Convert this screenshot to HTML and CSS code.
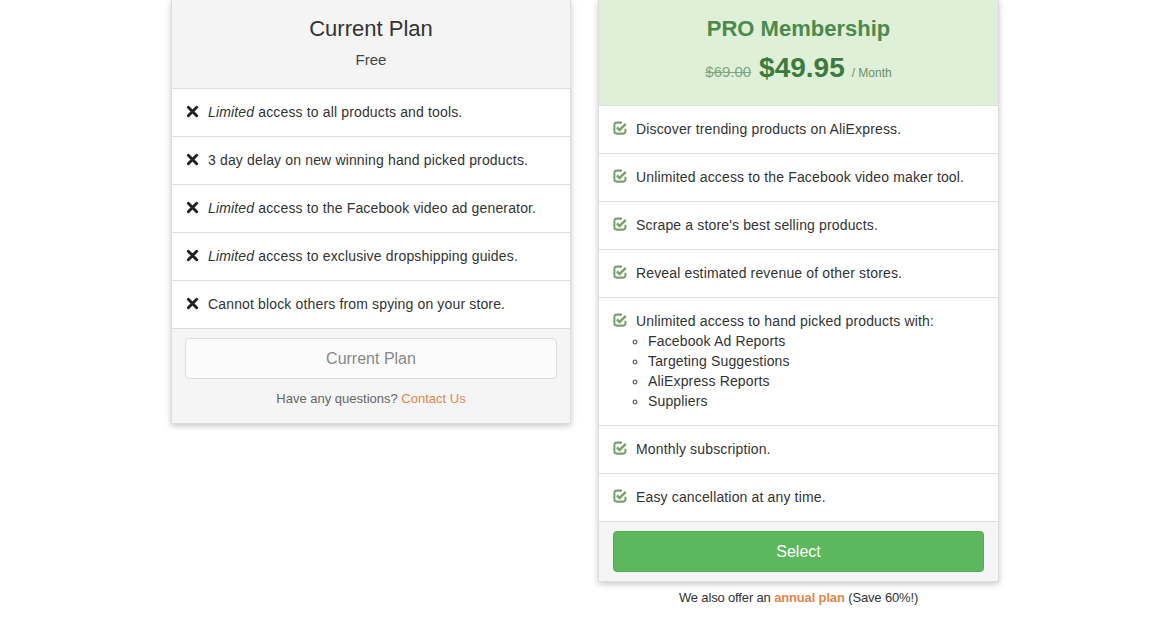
FILE: index.html
```html
<!DOCTYPE html>
<html>
<head>
<meta charset="utf-8">
<link rel="stylesheet" href="styles.css">
</head>
<body>
<div class="plans">
  <div class="col">
    <div class="card">
      <div class="head head-free">
        <h3 class="title">Current Plan</h3>
        <div class="sub">Free</div>
      </div>
      <ul class="feats feats-free">
        <li><svg class="ico" viewBox="0 0 14 14"><path d="M2.5 2.5 L11.5 11.5 M11.5 2.5 L2.5 11.5" stroke="#222" stroke-width="3.2" stroke-linecap="round"/></svg><span><em>Limited</em> access to all products and tools.</span></li>
        <li><svg class="ico" viewBox="0 0 14 14"><path d="M2.5 2.5 L11.5 11.5 M11.5 2.5 L2.5 11.5" stroke="#222" stroke-width="3.2" stroke-linecap="round"/></svg><span>3 day delay on new winning hand picked products.</span></li>
        <li><svg class="ico" viewBox="0 0 14 14"><path d="M2.5 2.5 L11.5 11.5 M11.5 2.5 L2.5 11.5" stroke="#222" stroke-width="3.2" stroke-linecap="round"/></svg><span><em>Limited</em> access to the Facebook video ad generator.</span></li>
        <li><svg class="ico" viewBox="0 0 14 14"><path d="M2.5 2.5 L11.5 11.5 M11.5 2.5 L2.5 11.5" stroke="#222" stroke-width="3.2" stroke-linecap="round"/></svg><span><em>Limited</em> access to exclusive dropshipping guides.</span></li>
        <li><svg class="ico" viewBox="0 0 14 14"><path d="M2.5 2.5 L11.5 11.5 M11.5 2.5 L2.5 11.5" stroke="#222" stroke-width="3.2" stroke-linecap="round"/></svg><span>Cannot block others from spying on your store.</span></li>
      </ul>
      <div class="foot foot-free">
        <div class="btn btn-current">Current Plan</div>
        <div class="ask">Have any questions? <a class="link" href="#">Contact Us</a></div>
      </div>
    </div>
  </div>
  <div class="col">
    <div class="card">
      <div class="head head-pro">
        <h3 class="title title-pro">PRO Membership</h3>
        <div class="price"><s class="old">$69.00</s> <span class="now">$49.95</span> <span class="per">/ Month</span></div>
      </div>
      <ul class="feats feats-pro">
        <li><svg class="ico" viewBox="0 0 14 14"><path d="M9 1.6 H3.4 A2 2 0 0 0 1.4 3.6 V10.6 A2 2 0 0 0 3.4 12.6 H10.4 A2 2 0 0 0 12.4 10.6 V7.8" fill="none" stroke="#77a46b" stroke-width="2.1"/><path d="M3.9 6.3 L6.6 9 L12.8 2.8" fill="none" stroke="#77a46b" stroke-width="2.5"/></svg><span>Discover trending products on AliExpress.</span></li>
        <li><svg class="ico" viewBox="0 0 14 14"><path d="M9 1.6 H3.4 A2 2 0 0 0 1.4 3.6 V10.6 A2 2 0 0 0 3.4 12.6 H10.4 A2 2 0 0 0 12.4 10.6 V7.8" fill="none" stroke="#77a46b" stroke-width="2.1"/><path d="M3.9 6.3 L6.6 9 L12.8 2.8" fill="none" stroke="#77a46b" stroke-width="2.5"/></svg><span>Unlimited access to the Facebook video maker tool.</span></li>
        <li><svg class="ico" viewBox="0 0 14 14"><path d="M9 1.6 H3.4 A2 2 0 0 0 1.4 3.6 V10.6 A2 2 0 0 0 3.4 12.6 H10.4 A2 2 0 0 0 12.4 10.6 V7.8" fill="none" stroke="#77a46b" stroke-width="2.1"/><path d="M3.9 6.3 L6.6 9 L12.8 2.8" fill="none" stroke="#77a46b" stroke-width="2.5"/></svg><span>Scrape a store's best selling products.</span></li>
        <li><svg class="ico" viewBox="0 0 14 14"><path d="M9 1.6 H3.4 A2 2 0 0 0 1.4 3.6 V10.6 A2 2 0 0 0 3.4 12.6 H10.4 A2 2 0 0 0 12.4 10.6 V7.8" fill="none" stroke="#77a46b" stroke-width="2.1"/><path d="M3.9 6.3 L6.6 9 L12.8 2.8" fill="none" stroke="#77a46b" stroke-width="2.5"/></svg><span>Reveal estimated revenue of other stores.</span></li>
        <li><svg class="ico" viewBox="0 0 14 14"><path d="M9 1.6 H3.4 A2 2 0 0 0 1.4 3.6 V10.6 A2 2 0 0 0 3.4 12.6 H10.4 A2 2 0 0 0 12.4 10.6 V7.8" fill="none" stroke="#77a46b" stroke-width="2.1"/><path d="M3.9 6.3 L6.6 9 L12.8 2.8" fill="none" stroke="#77a46b" stroke-width="2.5"/></svg><div>Unlimited access to hand picked products with:
          <ul class="sublist">
            <li>Facebook Ad Reports</li>
            <li>Targeting Suggestions</li>
            <li>AliExpress Reports</li>
            <li>Suppliers</li>
          </ul></div></li>
        <li><svg class="ico" viewBox="0 0 14 14"><path d="M9 1.6 H3.4 A2 2 0 0 0 1.4 3.6 V10.6 A2 2 0 0 0 3.4 12.6 H10.4 A2 2 0 0 0 12.4 10.6 V7.8" fill="none" stroke="#77a46b" stroke-width="2.1"/><path d="M3.9 6.3 L6.6 9 L12.8 2.8" fill="none" stroke="#77a46b" stroke-width="2.5"/></svg><span>Monthly subscription.</span></li>
        <li><svg class="ico" viewBox="0 0 14 14"><path d="M9 1.6 H3.4 A2 2 0 0 0 1.4 3.6 V10.6 A2 2 0 0 0 3.4 12.6 H10.4 A2 2 0 0 0 12.4 10.6 V7.8" fill="none" stroke="#77a46b" stroke-width="2.1"/><path d="M3.9 6.3 L6.6 9 L12.8 2.8" fill="none" stroke="#77a46b" stroke-width="2.5"/></svg><span>Easy cancellation at any time.</span></li>
      </ul>
      <div class="foot foot-pro">
        <div class="btn btn-select">Select</div>
      </div>
    </div>
    <div class="annual">We also offer an <a class="link link-bold" href="#">annual plan</a> (Save 60%!)</div>
  </div>
</div>
</body>
</html>
```

FILE: styles.css
```css
* { box-sizing: border-box; }
html, body { margin: 0; padding: 0; background: #fff; }
body {
  font-family: "Liberation Sans", Arial, Helvetica, sans-serif;
  font-size: 14px;
  line-height: 20px;
  color: #333;
}
.plans {
  display: flex;
  align-items: flex-start;
  gap: 27px;
  padding-left: 171px;
}
.col { width: 400px; }
.col + .col { width: 401px; }
.card {
  background: #fff;
  border: 1px solid #ddd;
  border-top: none;
  box-shadow: 0 2px 6px rgba(0,0,0,0.22);
}
.head {
  text-align: center;
  padding: 13px 10px 0;
}
.head-free { background: #f4f4f4; height: 88px; }
.head-pro { background: #dff0d8; height: 105px; }
.title {
  margin: 0;
  font-size: 22px;
  line-height: 32px;
  font-weight: normal;
  color: #333;
}
.title-pro { font-weight: bold; color: #4b8a4b; }
.sub {
  margin-top: 5px;
  font-size: 15px;
  line-height: 20px;
  color: #444;
}
.price {
  margin-top: 5px;
  line-height: 36px;
  color: #3c763d;
}
.old { font-size: 15px; color: #7ea57e; }
.now { font-size: 28px; font-weight: bold; color: #3d7a3d; margin: 0 3px 0 4px; }
.per { font-size: 12px; color: #6a8f6a; }
.feats {
  list-style: none;
  margin: 0;
  padding: 0;
  letter-spacing: 0.15px;
}
.feats > li {
  display: flex;
  align-items: flex-start;
  gap: 9px;
  border-top: 1px solid #ddd;
  padding: 13px 14px 14px;
}
.feats-free > li { gap: 9px; padding-left: 14px; }
.feats-pro > li { gap: 9px; padding-left: 14px; }
.ico {
  flex: 0 0 13px;
  width: 13px;
  height: 13px;
  margin-top: 3px;
}
.feats-pro .ico { flex-basis: 14px; width: 14px; height: 14px; margin-top: 2px; }
.sublist {
  list-style: circle;
  margin: 0;
  padding-left: 12px;
}
.sublist li { line-height: 20px; }
.foot {
  border-top: 1px solid #ddd;
  background: #f5f5f5;
}
.foot-free { padding: 9px 13px 14px; }
.foot-pro { padding: 9px 14px 9px; }
.btn {
  height: 41px;
  border-radius: 4px;
  display: flex;
  align-items: center;
  justify-content: center;
  font-size: 16px;
}
.btn-current {
  background: #fbfbfb;
  border: 1px solid #dcdcdc;
  color: #888;
}
.btn-select {
  background: #5cb85c;
  border: 1px solid #4cae4c;
  color: #fff;
}
.ask {
  margin-top: 10px;
  text-align: center;
  color: #666;
  font-size: 13px;
}
.link { color: #e0884a; text-decoration: none; }
.link-bold { font-weight: bold; }
.annual {
  margin-top: 6px;
  text-align: center;
  color: #333;
  font-size: 13px;
  letter-spacing: -0.15px;
}
```
